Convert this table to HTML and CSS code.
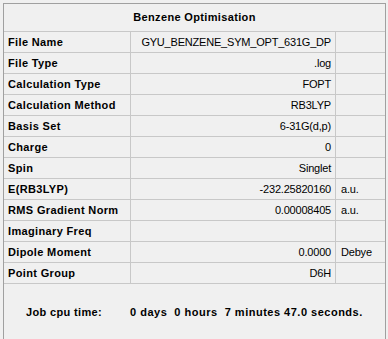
FILE: index.html
```html
<!DOCTYPE html>
<html>
<head>
<meta charset="utf-8">
<title>Benzene Optimisation</title>
<link rel="stylesheet" href="styles.css">
</head>
<body>
<div class="panel">
  <div class="title">Benzene Optimisation</div>
  <div class="row"><div class="label">File Name</div><div class="value">GYU_BENZENE_SYM_OPT_631G_DP</div><div class="unit"></div></div>
  <div class="row"><div class="label">File Type</div><div class="value">.log</div><div class="unit"></div></div>
  <div class="row"><div class="label">Calculation Type</div><div class="value">FOPT</div><div class="unit"></div></div>
  <div class="row"><div class="label">Calculation Method</div><div class="value">RB3LYP</div><div class="unit"></div></div>
  <div class="row"><div class="label">Basis Set</div><div class="value">6-31G(d,p)</div><div class="unit"></div></div>
  <div class="row"><div class="label">Charge</div><div class="value">0</div><div class="unit"></div></div>
  <div class="row"><div class="label">Spin</div><div class="value">Singlet</div><div class="unit"></div></div>
  <div class="row"><div class="label">E(RB3LYP)</div><div class="value">-232.25820160</div><div class="unit">a.u.</div></div>
  <div class="row"><div class="label">RMS Gradient Norm</div><div class="value">0.00008405</div><div class="unit">a.u.</div></div>
  <div class="row"><div class="label">Imaginary Freq</div><div class="value"></div><div class="unit"></div></div>
  <div class="row"><div class="label">Dipole Moment</div><div class="value">0.0000</div><div class="unit">Debye</div></div>
  <div class="row"><div class="label">Point Group</div><div class="value">D6H</div><div class="unit"></div></div>
  <div class="footer"><span class="cpu-label">Job cpu time:</span><span class="cpu-value">0 days  0 hours  7 minutes 47.0 seconds.</span></div>
</div>
</body>
</html>
```
FILE: styles.css
```css
html, body {
  margin: 0;
  padding: 0;
  background: #f0f0f0;
}

body {
  font-family: "Liberation Sans", Arial, sans-serif;
  font-size: 11px;
  color: #000;
  height: 339px;
  overflow: hidden;
}

.panel {
  margin: 3px 0 0 3px;
  width: 381px;
  height: 336px;
  border: 1px solid #a0a0a0;
  border-bottom: none;
}

.title {
  height: 27px;
  line-height: 27px;
  text-align: center;
  font-weight: bold;
  letter-spacing: 0.35px;
  border-bottom: 1px solid #c8c8c8;
}

.row {
  display: flex;
  height: 20px;
  line-height: 20px;
  border-bottom: 1px solid #c8c8c8;
}

.label {
  width: 122px;
  padding-left: 4px;
  border-right: 1px solid #c8c8c8;
  font-weight: bold;
  letter-spacing: 0.35px;
  white-space: nowrap;
}

.value {
  width: 200px;
  padding-right: 4px;
  border-right: 1px solid #c8c8c8;
  text-align: right;
  letter-spacing: -0.2px;
  white-space: nowrap;
}

.unit {
  flex: 1;
  padding-left: 5px;
  letter-spacing: -0.2px;
  white-space: nowrap;
}

.footer {
  padding: 21px 0 0 22px;
  line-height: 14px;
  font-weight: bold;
  letter-spacing: 0.35px;
  white-space: nowrap;
}

.cpu-label {
  display: inline-block;
  width: 104px;
}

.cpu-value {
  white-space: pre;
  letter-spacing: 0.5px;
}
```
